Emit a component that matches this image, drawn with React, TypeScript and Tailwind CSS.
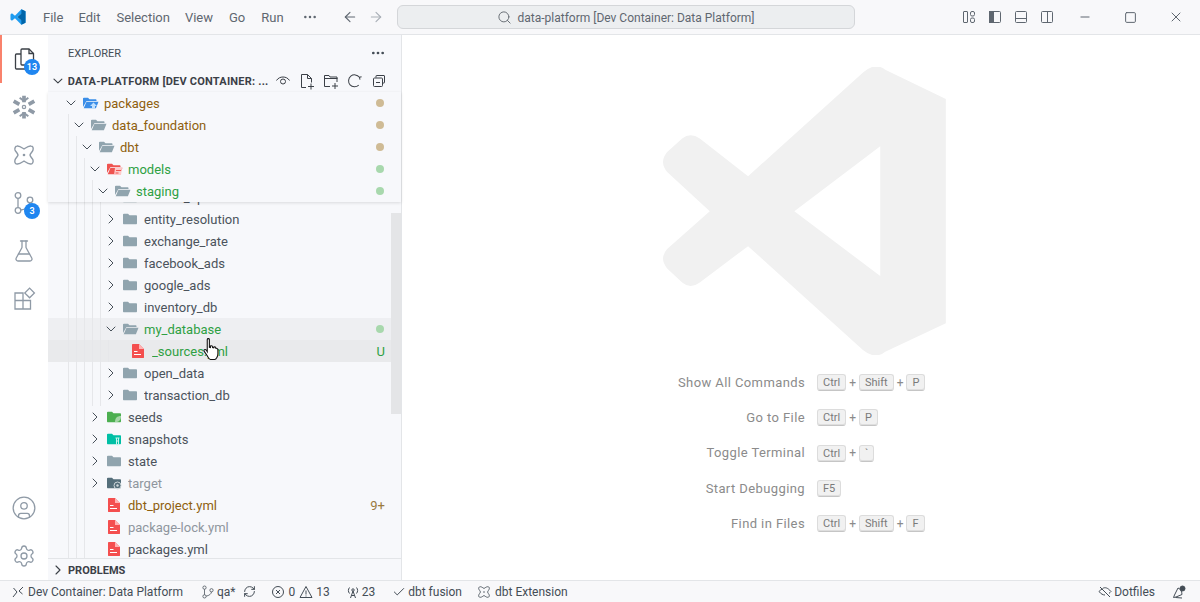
import { ChevronRight, ChevronDown, Search, ArrowLeft, ArrowRight, Ellipsis, Minus, Square, X, RefreshCw, Check, FlaskConical, Settings, CircleUser } from 'lucide-react'
import type { ReactNode } from 'react'

const font = { fontFamily: 'Roboto, "Noto Sans", sans-serif' }

type RowProps = {
  depth: number
  name: string
  open?: boolean
  file?: boolean
  icon?: ReactNode
  color?: string
  deco?: string
  decoColor?: string
  dot?: string
  bg?: string
}

function FolderClosed({ color = '#90a4ae', children }: { color?: string; children?: ReactNode }) {
  return (
    <svg width="16" height="16" viewBox="0 0 16 16" className="shrink-0">
      <path d="M0 3.500C0 3 .3 2.700 1 2.700h4l1.500 1.500H13c.6 0 1 .4 1 1V12.300c0 .6-.4 1-1 1H1c-.6 0-1-.4-1-1z" fill={color} />
      {children}
    </svg>
  )
}

function FolderOpen({ color = '#90a4ae', children }: { color?: string; children?: ReactNode }) {
  return (
    <svg width="16" height="16" viewBox="0 0 16 16" className="shrink-0">
      <path d="M0 3.500C0 3 .3 2.700 1 2.700h4l1.500 1.500H12.500c.6 0 1 .4 1 1v.8H3.500L0 12z" fill={color} />
      <path d="M3.500 6.800H15.500l-2.600 6.500H.7z" fill={color} />
      {children}
    </svg>
  )
}

function YamlFile() {
  return (
    <svg width="16" height="16" viewBox="0 0 16 16" className="shrink-0">
      <path d="M1 1.700c0-.5.3-.8.8-.8H8L13 5.900v8.300c0 .5-.3.9-.8.900H1.800c-.5 0-.8-.4-.8-.9z" fill="#f44f4f" />
      <path d="M8 .9V5.900H13z" fill="#ffb3b3" />
      <path d="M3 8.500h3.500M3 11.500h7" stroke="#fff" strokeWidth="1.200" />
    </svg>
  )
}

function Row({ depth, name, open, file, icon, color = '#4b535c', deco, decoColor, dot, bg }: RowProps) {
  return (
    <div className={`relative flex h-[22px] shrink-0 items-center pr-4 ${bg ?? ''}`} style={{ paddingLeft: 15 + depth * 8 }}>
      {Array.from({ length: depth }).map((_, i) => (
        <span key={i} className="absolute top-0 bottom-0 w-px bg-[#e6e7ea]" style={{ left: 20 + i * 8 }} />
      ))}
      <span className="flex w-4 shrink-0 justify-center text-[#444d56]">
        {file ? null : open ? <ChevronDown size={18} strokeWidth={1.1} absoluteStrokeWidth /> : <ChevronRight size={18} strokeWidth={1.1} absoluteStrokeWidth />}
      </span>
      <span className="ml-[4px] mr-[5px] flex w-4 shrink-0 justify-center">{icon}</span>
      <span className="flex-1 truncate pt-[1px] text-[13px]" style={{ color }}>{name}</span>
      {dot ? <span className="mr-[1px] h-[8px] w-[8px] rounded-full" style={{ background: dot }} /> : null}
      {deco ? <span className="pt-[1px] text-[13px]" style={{ color: decoColor }}>{deco}</span> : null}
    </div>
  )
}

const amber = '#8f5f0e'
const green = '#2ea043'
const amberDot = '#cfbb95'
const greenDot = '#a8d8ad'

function Kbd({ children }: { children: string }) {
  return (
    <span className="inline-flex h-[17px] items-center rounded-[3px] border border-[#dcdcdc] border-b-[#c5c5c5] bg-[#f1f1f1] px-[5px] text-[11px] leading-none text-[#7a7a7a] shadow-[inset_0_-1px_0_#dedede]">
      {children}
    </span>
  )
}

function Shortcut({ label, keys }: { label: string; keys: string[] }) {
  return (
    <div className="flex h-[35.25px] items-center">
      <span className="w-[127px] whitespace-nowrap text-right text-[13px] tracking-[0.4px] text-[#8b8b8b]">{label}</span>
      <span className="ml-[12px] flex w-[107px] items-center gap-[3px]">
        {keys.map((k, i) => (
          <span key={k} className="flex items-center gap-[3px]">
            {i > 0 ? <span className="text-[12px] text-[#8b8b8b]">+</span> : null}
            <Kbd>{k}</Kbd>
          </span>
        ))}
      </span>
    </div>
  )
}

function Badge({ children }: { children: string }) {
  return (
    <span className="absolute right-[8px] bottom-[8px] flex h-[16px] min-w-[16px] items-center justify-center rounded-full bg-[#1f86f0] text-[9px] font-semibold leading-none text-white">
      {children}
    </span>
  )
}

function ActivityItem({ children, badge, active }: { children: ReactNode; badge?: string; active?: boolean }) {
  return (
    <div className="relative flex h-12 w-12 items-center justify-center">
      {active ? <span className="absolute top-0 bottom-0 left-0 w-[2px] bg-[#f9826c]" /> : null}
      {children}
      {badge ? <Badge>{badge}</Badge> : null}
    </div>
  )
}

function Vscode() {
  return (
    <svg width="16" height="16" viewBox="0 0 100 100">
      <path d="M71 2 L97 14 V86 L71 98 L31 58 L12 73 L3 66 V34 L12 27 L31 42Z M71 28 L46 50 L71 72Z" fill="#1f9cf0" fillRule="evenodd" />
      <path d="M71 2 L97 14 V86 L71 98Z M71 28 V72 L46 50Z" fill="#0065a9" fillRule="evenodd" />
    </svg>
  )
}

function DbtIcon({ size = 24, stroke = '#8f9aa6' }: { size?: number; stroke?: string }) {
  return (
    <svg width={size} height={size} viewBox="0 0 24 24" fill="none" stroke={stroke} strokeWidth="1.400">
      <path d="M5 3C7 2.500 9 4 12 6C15 4 17 2.500 19 3C21 3.200 21.500 5 21 7C20.500 9 18.500 10 18 12C18.500 14 20.500 15.500 21 17C21.500 19 20.500 21 19 21C17 21.500 15 20 12 18C9 20 7 21.500 5 21C3 20.800 2.500 19 3 17C3.500 15 5.500 14 6 12C5.500 10 3.500 8.500 3 7C2.500 5 3.500 3.200 5 3Z" />
      <circle cx="12" cy="12" r="1.300" fill={stroke} stroke="none" />
    </svg>
  )
}

function SourceControl({ size = 24, stroke = '#8f9aa6' }: { size?: number; stroke?: string }) {
  return (
    <svg width={size} height={size} viewBox="0 0 24 24" fill="none" stroke={stroke} strokeWidth="1.300">
      <circle cx="6" cy="4.500" r="2.800" />
      <circle cx="6" cy="19.500" r="2.800" />
      <circle cx="18" cy="9" r="2.800" />
      <path d="M6 7.300v9.400M8.800 19c5-.5 9-4 9.200-7.200" />
    </svg>
  )
}

export default function App() {
  return (
    <div className="flex h-[602px] w-[1200px] flex-col overflow-hidden bg-white" style={font}>
      {/* Title bar */}
      <div className="flex h-[35px] shrink-0 items-center border-b border-[#e3e5e8] bg-[#f8f8fa] text-[13px] text-[#5f6770]">
        <div className="flex w-[397px] shrink-0 items-center">
          <div className="flex w-[35px] justify-center pl-[1px]"><Vscode /></div>
          <span className="ml-[8px] pt-[1px]">File</span>
          <span className="ml-[15px] pt-[1px]">Edit</span>
          <span className="ml-[16px] pt-[1px]">Selection</span>
          <span className="ml-[15px] pt-[1px]">View</span>
          <span className="ml-[16px] pt-[1px]">Go</span>
          <span className="ml-[16px] pt-[1px]">Run</span>
          <Ellipsis size={16} strokeWidth={1.200} absoluteStrokeWidth className="ml-[18px]" />
          <ArrowLeft size={16} strokeWidth={1.100} absoluteStrokeWidth className="ml-[24px]" />
          <ArrowRight size={16} strokeWidth={1.100} absoluteStrokeWidth className="ml-[10px] text-[#a9afb6]" />
        </div>
        <div className="flex h-[24px] w-[458px] shrink-0 items-center justify-center gap-[5px] rounded-[6px] border border-[#d4d6d9] bg-[#eceef0] text-[12px]">
          <Search size={15} strokeWidth={1} absoluteStrokeWidth className="text-[#6b7178]" />
          <span className="pt-[1px]">data-platform [Dev Container: Data Platform]</span>
        </div>
        <div className="flex-1" />
        <div className="flex items-center gap-[10px]">
          <svg width="16" height="16" viewBox="0 0 16 16" fill="none" stroke="#5f6770">
            <rect x="2.500" y="2.500" width="4" height="11" rx=".5" />
            <rect x="9.500" y="2.500" width="4" height="4.500" rx="1.500" />
            <rect x="9.500" y="9" width="4" height="4.500" rx="1.500" />
          </svg>
          <svg width="16" height="16" viewBox="0 0 16 16" fill="none" stroke="#5f6770">
            <rect x="2.500" y="2.500" width="11" height="11" rx="1" />
            <rect x="2.500" y="2.500" width="4" height="11" fill="#5f6770" />
          </svg>
          <svg width="16" height="16" viewBox="0 0 16 16" fill="none" stroke="#5f6770">
            <rect x="2.500" y="2.500" width="11" height="11" rx="1" />
            <path d="M2.500 9.500h11" />
          </svg>
          <svg width="16" height="16" viewBox="0 0 16 16" fill="none" stroke="#5f6770">
            <rect x="2.500" y="2.500" width="11" height="11" rx="1" />
            <path d="M8.500 2.500v11" />
          </svg>
        </div>
        <div className="ml-[6px] mr-[1px] flex items-center">
          <span className="flex w-[46px] justify-center pl-[1px]"><Minus size={14} strokeWidth={1} absoluteStrokeWidth /></span>
          <span className="flex w-[46px] justify-center"><Square size={13} strokeWidth={1} absoluteStrokeWidth /></span>
          <span className="flex w-[46px] justify-center"><X size={16} strokeWidth={1} absoluteStrokeWidth /></span>
        </div>
      </div>

      <div className="flex min-h-0 flex-1">
        {/* Activity bar */}
        <div className="flex w-12 shrink-0 flex-col bg-white">
          <ActivityItem active badge="13">
            <svg width="24" height="24" viewBox="0 0 24 24" fill="none" stroke="#3b4047" strokeWidth="1.300">
              <path d="M9 7H4.500c-.6 0-1 .4-1 1v13c0 .6.400 1 1 1h9c.6 0 1-.400 1-1v-3" />
              <path d="M9 3c0-.6.400-1 1-1h7l4.500 4.500V17c0 .6-.4 1-1 1H10c-.6 0-1-.4-1-1z" />
              <path d="M17 2v4.500h4.500" />
            </svg>
          </ActivityItem>
          <ActivityItem>
            <svg width="26" height="26" viewBox="0 0 24 24" fill="none" stroke="#8f9aa6" strokeWidth="3.400" strokeLinecap="butt">
              <path d="M12 1.500v6M12 16.500v6M2.500 6.500l5.200 3M16.300 14.500l5.200 3M2.500 17.500l5.200-3M16.300 9.500l5.200-3" />
              <path d="M8 3.500 12 6.500l4-3M8 20.500l4-3 4 3" strokeWidth="1.800" />
              <circle cx="12" cy="12" r="1.500" strokeWidth="1.200" />
            </svg>
          </ActivityItem>
          <ActivityItem><DbtIcon /></ActivityItem>
          <ActivityItem badge="3"><SourceControl /></ActivityItem>
          <ActivityItem><FlaskConical size={24} strokeWidth={1.300} absoluteStrokeWidth className="text-[#8f9aa6]" /></ActivityItem>
          <ActivityItem>
            <svg width="24" height="24" viewBox="0 0 24 24" fill="none" stroke="#8f9aa6" strokeWidth="1.300">
              <path d="M3 6h8v7.500h7.500V22H3zM3 13.500h8V22" />
              <rect x="14.200" y="2.500" width="6.800" height="6.800" transform="rotate(45 17.600 5.900)" />
            </svg>
          </ActivityItem>
          <div className="flex-1" />
          <ActivityItem><CircleUser size={26} strokeWidth={1.300} absoluteStrokeWidth className="text-[#8f9aa6]" /></ActivityItem>
          <ActivityItem><Settings size={24} strokeWidth={1.300} absoluteStrokeWidth className="text-[#8f9aa6]" /></ActivityItem>
        </div>

        {/* Sidebar */}
        <div className="flex w-[354px] shrink-0 flex-col border-r border-[#e3e5e8] bg-[#f7f8fb]">
          <div className="flex h-[35px] shrink-0 items-center justify-between pr-[15px] pl-[20px] text-[11px] text-[#444d56]">
            <span className="pt-[3px]">EXPLORER</span>
            <Ellipsis size={16} strokeWidth={1.400} absoluteStrokeWidth className="mt-[1px]" />
          </div>
          <div className="flex h-[22px] shrink-0 items-center pl-[2px] pr-[10px] text-[#3b4047]">
            <ChevronDown size={16} strokeWidth={1.100} absoluteStrokeWidth />
            <span className="ml-[2px] w-[205px] truncate pt-[3px] text-[11px] font-bold tracking-[0.22px]">DATA-PLATFORM [DEV CONTAINER: ...</span>
            <div className="ml-auto flex items-center">
              <span className="flex w-[24px] justify-center">
                <svg width="16" height="16" viewBox="0 0 16 16" fill="none" stroke="#3b4047">
                  <path d="M1.500 7.500C3 5 5.500 4 8 4s5 1 6.500 3.500" />
                  <circle cx="8" cy="8.500" r="2.500" />
                </svg>
              </span>
              <span className="flex w-[24px] justify-center">
                <svg width="18" height="18" viewBox="0 0 18 18" fill="none" stroke="#3b4047"><path d="M8 15.500H3.500v-13h6l4 4v4M9.500 2.500v4h4M13 11.500v6M10 14.500h6" /></svg>
              </span>
              <span className="flex w-[24px] justify-center">
                <svg width="18" height="18" viewBox="0 0 18 18" fill="none" stroke="#3b4047"><path d="M8 14.500H2.500v-11h4.500l1 1.500h7v5M2.500 6.500h13M13 11v6M10 14h6" /></svg>
              </span>
              <span className="flex w-[24px] justify-center">
                <svg width="16" height="16" viewBox="0 0 16 16" fill="none" stroke="#3b4047"><path d="M5.500 2.800A6 6 0 1 0 13 5.500M5.500 2.800V.5M5.500 2.800H8" transform="rotate(75 8 8)" /></svg>
              </span>
              <span className="flex w-[24px] justify-center">
                <svg width="16" height="16" viewBox="0 0 16 16" fill="none" stroke="#3b4047"><path d="M5 4.500V3c0-.3.200-.5.500-.5h7.500c.3 0 .5.200.5.500v6.500c0 .3-.2.500-.5.500H11.500" /><rect x="2.500" y="5" width="9" height="8.500" rx="1" /><path d="M5 9.500h4" /></svg>
              </span>
            </div>
          </div>

          {/* Sticky folders */}
          <div className="relative z-10 flex h-[110px] shrink-0 flex-col shadow-[0_1px_3px_rgba(0,0,0,0.12)]">
            <Row depth={0} name="packages" open color={amber} dot={amberDot} icon={
              <FolderOpen color="#3b8ee8"><path d="M10.500 7.500 7 11h2v2.500h3V11h2z" fill="#bfe0ff" /></FolderOpen>
            } />
            <Row depth={1} name="data_foundation" open color={amber} dot={amberDot} icon={<FolderOpen />} />
            <Row depth={2} name="dbt" open color={amber} dot={amberDot} icon={<FolderOpen />} />
            <Row depth={3} name="models" open color={green} dot={greenDot} icon={
              <FolderOpen color="#ef5350"><path d="M8 7h7l-1 7H7z" fill="#ffc9c9" /><path d="M9 9.500h5M8.500 12h3" stroke="#ef5350" strokeWidth="1.200" /></FolderOpen>
            } />
            <Row depth={4} name="staging" open color={green} dot={greenDot} icon={<FolderOpen />} />
          </div>

          {/* Scrolled list */}
          <div className="relative min-h-0 flex-1 overflow-hidden">
            <div className="-mt-[16px]">
              <Row depth={5} name="branch_ops" icon={<FolderClosed />} />
              <Row depth={5} name="entity_resolution" icon={<FolderClosed />} />
              <Row depth={5} name="exchange_rate" icon={<FolderClosed />} />
              <Row depth={5} name="facebook_ads" icon={<FolderClosed />} />
              <Row depth={5} name="google_ads" icon={<FolderClosed />} />
              <Row depth={5} name="inventory_db" icon={<FolderClosed />} />
              <Row depth={5} name="my_database" open color={green} dot={greenDot} bg="bg-[#eeeff2]" icon={<FolderOpen />} />
              <Row depth={6} file name="_sources.yml" color={green} deco="U" decoColor={green} bg="bg-[#e9eaec]" icon={<YamlFile />} />
              <Row depth={5} name="open_data" icon={<FolderClosed />} />
              <Row depth={5} name="transaction_db" icon={<FolderClosed />} />
              <Row depth={3} name="seeds" icon={
                <FolderClosed color="#4caf50"><path d="M8 13c0-4 2-6 6-6 0 4-2 6-6 6z" fill="#a5d6a7" /></FolderClosed>
              } />
              <Row depth={3} name="snapshots" icon={
                <FolderClosed color="#00bfa5"><path d="M8.500 7h4M9.500 7v7h2V7M9.500 10h2" stroke="#c8f5ec" strokeWidth="1" fill="none" /></FolderClosed>
              } />
              <Row depth={3} name="state" icon={<FolderClosed />} />
              <Row depth={3} name="target" color="#8f969e" icon={
                <FolderClosed color="#546e7a"><circle cx="10.500" cy="10.500" r="3.500" fill="none" stroke="#cfd8dc" /><circle cx="10.500" cy="10.500" r="1.200" fill="#cfd8dc" /></FolderClosed>
              } />
              <Row depth={3} file name="dbt_project.yml" color={amber} deco="9+" decoColor="#9a7a3f" icon={<YamlFile />} />
              <Row depth={3} file name="package-lock.yml" color="#8f969e" icon={<YamlFile />} />
              <Row depth={3} file name="packages.yml" icon={<YamlFile />} />
            </div>
            {/* Scrollbar */}
            <div className="absolute top-[11px] right-0 h-[201px] w-[10px] bg-[#e4e5e7]" />
            {/* Mouse cursor */}
            <svg width="17" height="25" viewBox="0 0 16 22" className="absolute top-[135px] left-[155px]">
              <path d="M4 1.500c0-1 2-1 2 0V9l1 .2V8c0-.8 2-.8 2 .2v1l1 .3V9c0-.8 2-.6 2 .3v1c0-.6 2-.4 2 .6v4c0 2.500-1.500 5.500-3 5.500H7c-1.500 0-2-1.500-3-3.500L1 12.500c-.6-1 1-2 2-1l1 1.500z" fill="#fff" stroke="#111" strokeWidth="1" />
            </svg>
          </div>

          <div className="flex h-[22px] shrink-0 items-center border-t border-[#e3e5e8] pl-[2px] text-[11px] font-bold text-[#3b4047]">
            <ChevronRight size={16} strokeWidth={1.100} absoluteStrokeWidth />
            <span className="ml-[2px] pt-[4px]">PROBLEMS</span>
          </div>
        </div>

        {/* Editor watermark */}
        <div className="flex min-w-0 flex-1 flex-col items-center bg-white pt-[32px]">
          <svg width="283" height="288" viewBox="68 50 849 865" className="ml-[7px] shrink-0">
            <path d="M670 65Q705 35 735 58L917 146V820L735 905Q705 930 668 900L323 588L178 697Q150 718 125 697L80 655Q55 625 80 597L208 483L80 365Q55 335 80 305L125 265Q150 245 178 265L323 378ZM720 288L462 483L720 678Z" fill="#f1f1f1" fillRule="evenodd" />
          </svg>
          <div className="mt-[10px] flex flex-col">
            <Shortcut label="Show All Commands" keys={['Ctrl', 'Shift', 'P']} />
            <Shortcut label="Go to File" keys={['Ctrl', 'P']} />
            <Shortcut label="Toggle Terminal" keys={['Ctrl', '`']} />
            <Shortcut label="Start Debugging" keys={['F5']} />
            <Shortcut label="Find in Files" keys={['Ctrl', 'Shift', 'F']} />
          </div>
        </div>
      </div>

      {/* Status bar */}
      <div className="flex h-[22px] shrink-0 items-center border-t border-[#e3e5e8] bg-[#f8f8fa] text-[12px] text-[#444d56]">
        <svg width="12" height="14" viewBox="0 0 12 14" fill="none" stroke="#444d56" className="ml-[12px]"><path d="M1 12 5 7 1.500 3M11 2 7 6 10.500 9" /></svg>
        <span className="ml-[4px]">Dev Container: Data Platform</span>
        <span className="ml-[18px]"><SourceControl size={14} stroke="#444d56" /></span>
        <span className="ml-[2px]">qa*</span>
        <RefreshCw size={13} strokeWidth={1} absoluteStrokeWidth className="ml-[8px]" />
        <svg width="14" height="14" viewBox="0 0 14 14" fill="none" stroke="#444d56" className="ml-[15px]"><circle cx="7" cy="7" r="5.500" /><path d="M5 5l4 4M9 5l-4 4" /></svg>
        <span className="ml-[3px]">0</span>
        <svg width="14" height="14" viewBox="0 0 14 14" fill="none" stroke="#444d56" className="ml-[4px]"><path d="M7 1.500 13 12.500H1zM7 5.500v4M7 10.500v1" /></svg>
        <span className="ml-[3px]">13</span>
        <svg width="14" height="14" viewBox="0 0 14 14" fill="none" stroke="#444d56" className="ml-[16px]"><path d="M7 6 4.500 13M7 6l2.500 7M5.500 10.500h3M3.500 2.500c-1.500 2-1.500 4 0 6M10.500 2.500c1.500 2 1.500 4 0 6" /><circle cx="7" cy="5" r="1.200" /></svg>
        <span className="ml-[2px]">23</span>
        <Check size={14} strokeWidth={1} absoluteStrokeWidth className="ml-[17px]" />
        <span className="ml-[2px]">dbt fusion</span>
        <span className="ml-[15px]"><DbtIcon size={14} stroke="#444d56" /></span>
        <span className="ml-[4px]">dbt Extension</span>
        <div className="flex-1" />
        <svg width="14" height="14" viewBox="0 0 14 14" fill="none" stroke="#444d56"><path d="M2 2l10 10M4.500 3.500C7 2 9.500 2.500 13 6.500c-.7.800-1.300 1.400-2 1.900M1 6.500c1-1 2-1.900 3-2.500M7 10c-2 0-4-1-6-3.500" /></svg>
        <span className="ml-[2px]">Dotfiles</span>
        <svg width="14" height="14" viewBox="0 0 14 14" fill="none" stroke="#444d56" className="ml-[17px] mr-[14px]"><path d="M6 3 2.500 10 1.500 12.500 4 12l6-2.500M6 3c2 .5 4 3 4 6.500M3.500 12.500 10 13" /><circle cx="10.500" cy="3.500" r="2.500" fill="#444d56" /></svg>
      </div>
    </div>
  )
}
